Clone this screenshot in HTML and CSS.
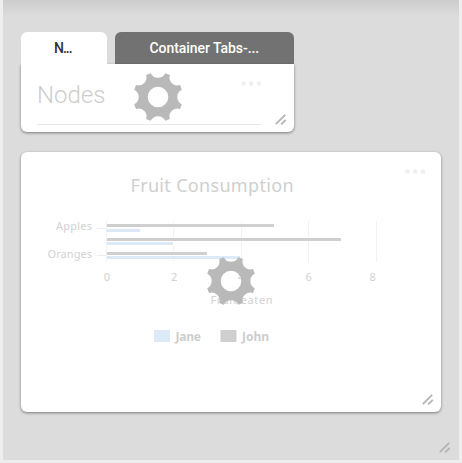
FILE: index.html
```html
<!DOCTYPE html>
<html lang="en">
<head>
<meta charset="utf-8">
<title>Dashboard</title>
<link rel="stylesheet" href="styles.css">
</head>
<body>
<svg class="defs" width="0" height="0">
  <defs>
    <path id="gear" fill-rule="evenodd" d="M23.8-7.2A8 8 0 0 0 23.8 7.2L22 11.9A8 8 0 0 0 11.9 22L7.2 23.8A8 8 0 0 0-7.2 23.8L-11.9 22A8 8 0 0 0-22 11.9L-23.8 7.2A8 8 0 0 0-23.8-7.2L-22-11.9A8 8 0 0 0-11.9-22L-7.2-23.8A8 8 0 0 0 7.2-23.8L11.9-22A8 8 0 0 0 22-11.9ZM10.3 0A10.3 10.3 0 1 0-10.3 0A10.3 10.3 0 1 0 10.3 0Z"/>
    <path id="grip" d="M.8 10.2 10.2.8M6.2 10.4l4.6-4.6"/>
    <g id="dots"><circle cx="2.5" cy="2.5" r="2.3"/><circle cx="10.2" cy="2.5" r="2.3"/><circle cx="17.9" cy="2.5" r="2.3"/></g>
  </defs>
</svg>
<main class="panel">
  <section class="tabbed">
    <nav class="tabs">
      <div class="tab active"><span class="short">N...</span></div>
      <div class="tab"><span>Container Tabs-...</span></div>
    </nav>
    <div class="card nodes">
      <h1>Nodes</h1>
      <svg class="dots" width="21" height="5"><use href="#dots"/></svg>
      <svg class="gear" width="50" height="50" viewBox="-25 -25 50 50"><use href="#gear"/></svg>
      <svg class="grip" width="12" height="12"><use href="#grip"/></svg>
    </div>
  </section>
  <section class="card chart-card">
    <svg class="dots" width="21" height="5"><use href="#dots"/></svg>
    <svg class="chart" width="420" height="260" viewBox="21 152 420 260">
      <text class="title" x="130.5" y="192" textLength="163">Fruit Consumption</text>
      <path class="grid" d="M106.5 221v41M173.500 221v41M241.500 221v41M308.500 221v41M376.500 221v41"/>
      <path class="tick" d="M97 228.500h10M97 255.500h10"/>
      <g class="halo">
        <path d="M107 223h168v5H107zM107 237h235v5H107zM107 251h101v5H107z"/>
        <path d="M107 228h34v5H107zM107 241h67v5H107zM107 255h134v5H107z"/>
      </g>
      <g class="john"><path d="M107 224h167v3H107zM107 238h234v3H107zM107 252h100v3H107z"/></g>
      <g class="jane"><path d="M107 229h33v3H107zM107 242h66v3H107zM107 256h133v3H107z"/></g>
      <g class="label">
        <text x="56" y="230" textLength="36">Apples</text>
        <text x="47.500" y="258" textLength="44.500">Oranges</text>
        <text x="103.700" y="281">0</text>
        <text x="171" y="281">2</text>
        <text x="238" y="281">4</text>
        <text x="305.500" y="281">6</text>
        <text x="369.500" y="281">8</text>
        <text x="210.500" y="304" textLength="62">Fruit eaten</text>
      </g>
      <rect class="jane" x="154" y="330" width="16" height="12"/>
      <rect class="john" x="220.500" y="330" width="16" height="12"/>
      <g class="legend">
        <text x="175.500" y="341" textLength="25.500">Jane</text>
        <text x="242" y="341" textLength="27">John</text>
      </g>
      <use class="gear-shape" href="#gear" x="231" y="281"/>
    </svg>
    <svg class="grip" width="12" height="12"><use href="#grip"/></svg>
  </section>
  <svg class="grip panel-grip" width="12" height="12"><use href="#grip"/></svg>
</main>
</body>
</html>
```

FILE: styles.css
```css
* { box-sizing: border-box; }
body {
  margin: 0;
  height: 463px;
  overflow: hidden;
  background: #eee;
  font-family: Roboto, sans-serif;
}
svg { display: block; }
.defs { position: absolute; }
.panel {
  position: relative;
  height: 460px;
  margin: 0 3px;
  padding: 32px 18px 0;
  background: linear-gradient(#cdcdcd, #dcdcdc 16px);
}
.tabbed { width: 273px; }
.tabs { display: flex; gap: 8px; height: 32px; }
.tab {
  flex: 1;
  padding-left: 34.5px;
  border-radius: 6px 6px 0 0;
  background: #727272;
  color: #fff;
  font-size: 14px;
  font-weight: 500;
  letter-spacing: -.06px;
  line-height: 32px;
  white-space: nowrap;
}
.tab.active {
  position: relative;
  z-index: 1;
  flex: 0 0 86px;
  padding-left: 33px;
  background: #fff;
  color: #333;
  letter-spacing: -1px;
}
.card {
  position: relative;
  border-radius: 6px;
  background: #fff;
  box-shadow: 0 1px 3px rgba(0, 0, 0, .45);
}
.nodes {
  height: 68px;
  padding: 0 33px 0 16px;
  border-radius: 0 0 6px 6px;
}
.nodes h1 {
  height: 61px;
  margin: 0;
  border-bottom: 1px solid #e9e9e9;
  color: #cdcdcd;
  font-size: 24px;
  font-weight: 300;
  line-height: 62px;
}
.dots { position: absolute; top: 17px; right: 15px; fill: #efefef; }
.nodes .dots { right: 32px; }
.gear { position: absolute; left: 112px; top: 8px; fill: #b9b9b9; }
.grip {
  position: absolute;
  right: 7px;
  bottom: 6px;
  fill: none;
  stroke: #b4b4b4;
  stroke-width: 1.8;
}
.chart-card { width: 420px; height: 260px; margin-top: 20px; }
.panel-grip { right: 8px; bottom: 6px; }
.chart { font-family: "Noto Sans", sans-serif; }
.title { fill: #cfcfcf; font-size: 18px; }
.label { fill: #d2d2d2; font-size: 11px; }
.legend { fill: #cdcdcd; font-size: 12px; font-weight: 700; }
.grid { stroke: #f2f2f2; }
.tick { stroke: #f0f0f3; }
.halo { fill: #fff; }
.john { fill: #cfcfcf; }
.jane { fill: #dceaf8; }
.gear-shape { fill: #b9b9b9; }
```
